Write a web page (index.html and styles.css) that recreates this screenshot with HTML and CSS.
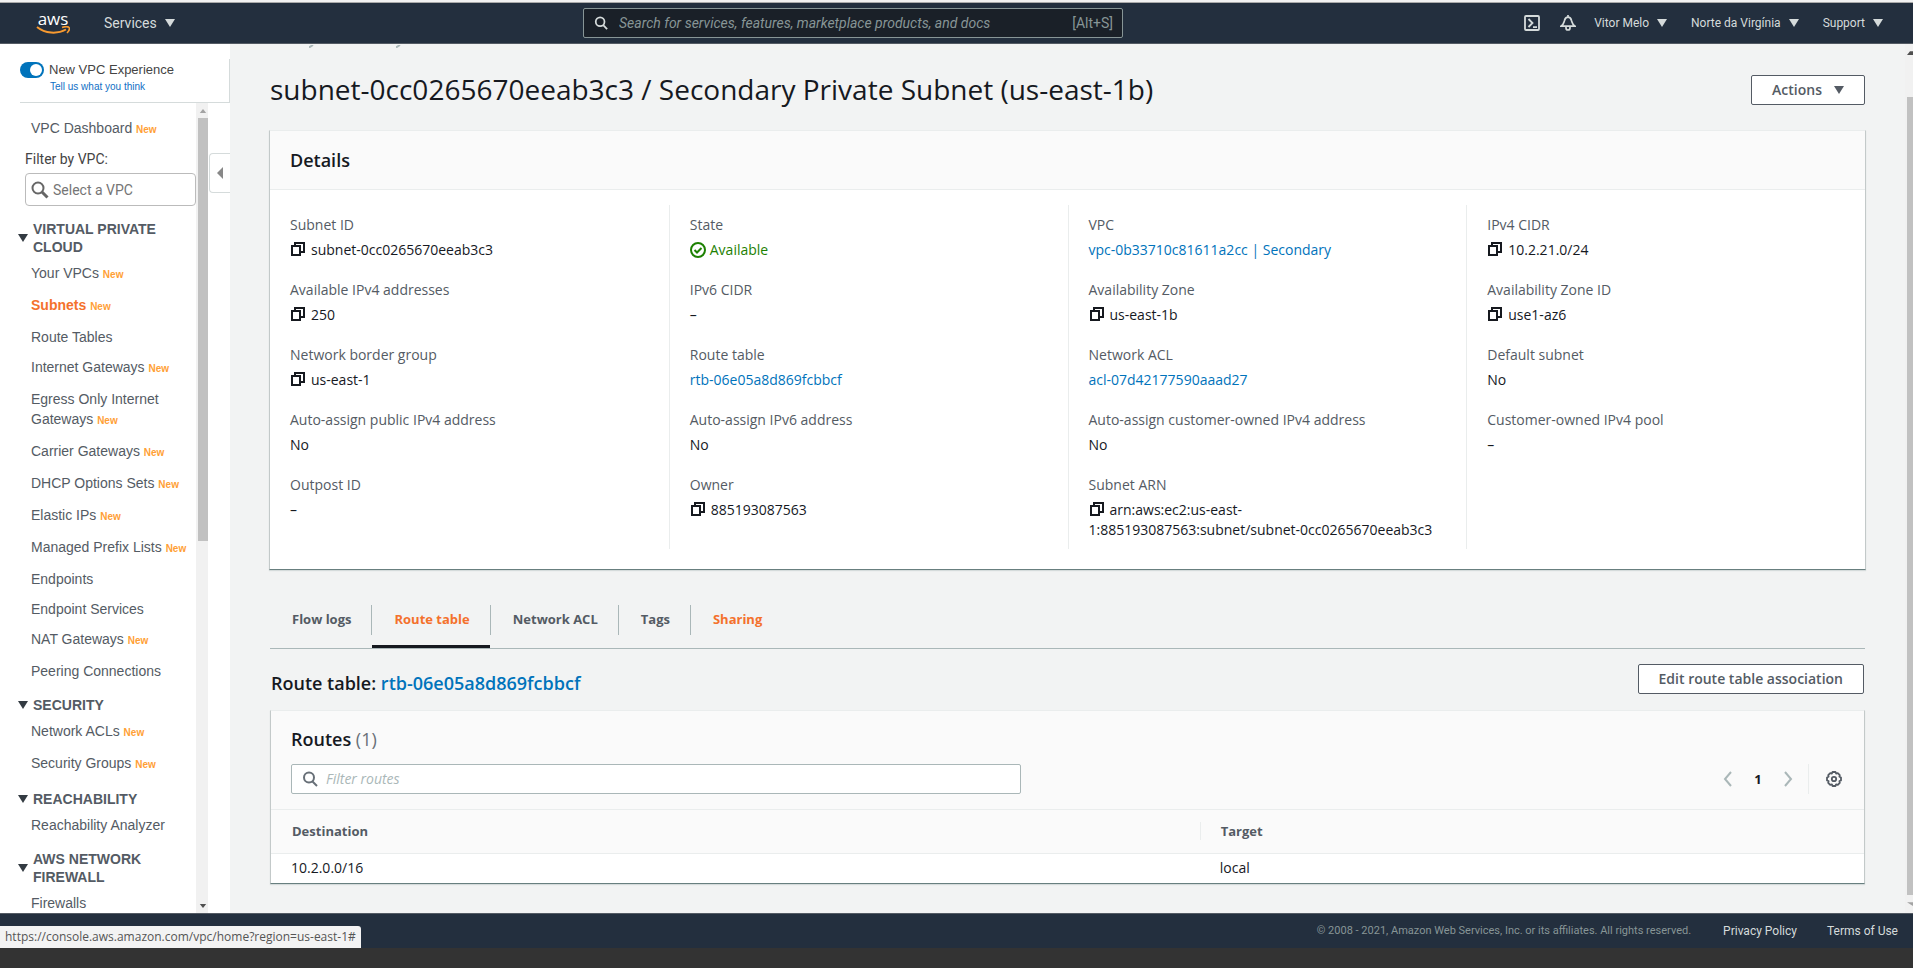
FILE: index.html
```html
<!DOCTYPE html>
<html lang="en">
<head>
<meta charset="utf-8">
<title>Subnets | VPC Management Console</title>
<link rel="stylesheet" href="styles.css">
</head>
<body>
<svg class="defs" aria-hidden="true">
  <symbol id="copy" viewBox="0 0 16 16"><path d="M2 5h8v9H2zM5 5V2h9v9h-4" fill="none" stroke="currentColor" stroke-width="2"/></symbol>
  <symbol id="search" viewBox="0 0 16 16"><circle cx="7" cy="6.500" r="5" fill="none" stroke="currentColor" stroke-width="2"/><path d="M10.500 10.500 15 15" stroke="currentColor" stroke-width="2"/></symbol>
  <symbol id="down" viewBox="0 0 10 8"><path d="M0 0h10L5 8z" fill="currentColor"/></symbol>
</svg>

<header class="topbar">
  <a class="logo" href="#" aria-label="AWS home">
    <span class="logo-text">aws</span>
    <svg class="smile" viewBox="0 0 34 9" aria-hidden="true"><path d="M1 1c8 6.500 20 7.500 29 2.500" fill="none" stroke="#f79a30" stroke-width="2"/><path d="M26 1.500c3-1 6-1 7 0s0 3.500-2 5.500" fill="none" stroke="#f79a30" stroke-width="1.600"/></svg>
  </a>
  <button class="nav-btn services">Services <svg class="caret"><use href="#down"/></svg></button>
  <label class="search-top">
    <svg class="i14"><use href="#search"/></svg>
    <input type="text" aria-label="Search" placeholder="Search for services, features, marketplace products, and docs">
    <span>[Alt+S]</span>
  </label>
  <nav class="tools">
    <button class="icon-btn" aria-label="CloudShell"><svg viewBox="0 0 16 16"><rect x="1" y="1" width="14" height="14" rx="1" fill="none" stroke="currentColor" stroke-width="1.800"/><path d="M4.500 4 8.500 8l-4 4M9 12.200h4" fill="none" stroke="currentColor" stroke-width="1.800"/></svg></button>
    <button class="icon-btn bell" aria-label="Notifications"><svg viewBox="0 0 16 16"><path d="M1 11.200c2.800-1.700 2.700-3.200 3.500-5.700C5 3.200 6.300 2.200 8 2.200s3 1 3.500 3.300c.8 2.500.7 4 3.500 5.700zM8 0v2.500M6 11.500V13q0 2 2 2t2-2v-1.500" fill="none" stroke="currentColor" stroke-width="1.700"/></svg></button>
    <button class="nav-btn small">Vitor Melo <svg class="caret"><use href="#down"/></svg></button>
    <button class="nav-btn small">Norte da Virgínia <svg class="caret"><use href="#down"/></svg></button>
    <button class="nav-btn small">Support <svg class="caret"><use href="#down"/></svg></button>
  </nav>
</header>

<div class="body">
  <aside class="sidebar">
    <div class="experience">
      <label class="switch"><input type="checkbox" checked><span class="track"></span><span>New VPC Experience</span></label>
      <a href="#">Tell us what you think</a>
    </div>
    <div class="side-scroll">
      <nav class="side-nav">
        <a class="item new dash" href="#">VPC Dashboard <b>New</b></a>
        <label class="filter-label" for="vpc">Filter by VPC:</label>
        <div class="vpc-select"><svg class="i18" viewBox="0 0 18 18"><circle cx="7" cy="7" r="5.500" fill="none" stroke="currentColor" stroke-width="2"/><path d="m11 11 5.500 5.500" stroke="currentColor" stroke-width="3"/></svg><input id="vpc" type="text" placeholder="Select a VPC"></div>
        <h2><svg class="caret"><use href="#down"/></svg>VIRTUAL PRIVATE CLOUD</h2>
        <a class="item new" href="#">Your VPCs <b>New</b></a>
        <a class="item new current" href="#">Subnets <b>New</b></a>
        <a class="item" href="#">Route Tables</a>
        <a class="item new" href="#">Internet Gateways <b>New</b></a>
        <a class="item new" href="#">Egress Only Internet<br>Gateways <b>New</b></a>
        <a class="item new" href="#">Carrier Gateways <b>New</b></a>
        <a class="item new" href="#">DHCP Options Sets <b>New</b></a>
        <a class="item new" href="#">Elastic IPs <b>New</b></a>
        <a class="item new" href="#">Managed Prefix Lists <b>New</b></a>
        <a class="item" href="#">Endpoints</a>
        <a class="item" href="#">Endpoint Services</a>
        <a class="item new" href="#">NAT Gateways <b>New</b></a>
        <a class="item" href="#">Peering Connections</a>
        <h2><svg class="caret"><use href="#down"/></svg>SECURITY</h2>
        <a class="item new" href="#">Network ACLs <b>New</b></a>
        <a class="item new" href="#">Security Groups <b>New</b></a>
        <h2><svg class="caret"><use href="#down"/></svg>REACHABILITY</h2>
        <a class="item" href="#">Reachability Analyzer</a>
        <h2><svg class="caret"><use href="#down"/></svg>AWS NETWORK FIREWALL</h2>
        <a class="item" href="#">Firewalls</a>
      </nav>
      <div class="scrollbar side-bar"><svg viewBox="0 0 8 5"><path d="M0 5h8L4 0z" fill="#a3a3a3"/></svg><i></i><svg viewBox="0 0 8 5"><path d="M0 0h8L4 5z" fill="#505050"/></svg></div>
    </div>
    <button class="collapse" aria-label="Collapse navigation"><svg viewBox="0 0 6 12"><path d="M6 0v12L0 6z" fill="#888"/></svg></button>
  </aside>

  <main>
    <div class="crumbs" aria-hidden="true"><svg viewBox="0 0 5 3"><path d="M0 2.500 4 0" stroke="#aab7b8" stroke-width="2"/></svg><svg viewBox="0 0 5 3"><path d="M0 2.500 4 0" stroke="#aab7b8" stroke-width="2"/></svg></div>
    <div class="title-row">
      <h1>subnet-0cc0265670eeab3c3 / Secondary Private Subnet (us-east-1b)</h1>
      <button class="btn">Actions <svg class="caret"><use href="#down"/></svg></button>
    </div>

    <section class="card">
      <h2 class="card-head">Details</h2>
      <div class="details">
        <dl>
          <dt>Subnet ID</dt><dd><svg class="copy"><use href="#copy"/></svg>subnet-0cc0265670eeab3c3</dd>
          <dt>Available IPv4 addresses</dt><dd><svg class="copy"><use href="#copy"/></svg>250</dd>
          <dt>Network border group</dt><dd><svg class="copy"><use href="#copy"/></svg>us-east-1</dd>
          <dt>Auto-assign public IPv4 address</dt><dd>No</dd>
          <dt>Outpost ID</dt><dd>–</dd>
        </dl>
        <dl>
          <dt>State</dt><dd class="ok"><svg class="check" viewBox="0 0 16 16"><circle cx="8" cy="8" r="7" fill="none" stroke="currentColor" stroke-width="2"/><path d="m4.500 8 2.500 2.500L11.500 6" fill="none" stroke="currentColor" stroke-width="2"/></svg>Available</dd>
          <dt>IPv6 CIDR</dt><dd>–</dd>
          <dt>Route table</dt><dd><a href="#">rtb-06e05a8d869fcbbcf</a></dd>
          <dt>Auto-assign IPv6 address</dt><dd>No</dd>
          <dt>Owner</dt><dd><svg class="copy"><use href="#copy"/></svg>885193087563</dd>
        </dl>
        <dl>
          <dt>VPC</dt><dd><a href="#">vpc-0b33710c81611a2cc | Secondary</a></dd>
          <dt>Availability Zone</dt><dd><svg class="copy"><use href="#copy"/></svg>us-east-1b</dd>
          <dt>Network ACL</dt><dd><a href="#">acl-07d42177590aaad27</a></dd>
          <dt>Auto-assign customer-owned IPv4 address</dt><dd>No</dd>
          <dt>Subnet ARN</dt><dd><svg class="copy"><use href="#copy"/></svg>arn:aws:ec2:us-east-<br>1:885193087563:subnet/subnet-0cc0265670eeab3c3</dd>
        </dl>
        <dl>
          <dt>IPv4 CIDR</dt><dd><svg class="copy"><use href="#copy"/></svg>10.2.21.0/24</dd>
          <dt>Availability Zone ID</dt><dd><svg class="copy"><use href="#copy"/></svg>use1-az6</dd>
          <dt>Default subnet</dt><dd>No</dd>
          <dt>Customer-owned IPv4 pool</dt><dd>–</dd>
        </dl>
      </div>
    </section>

    <div class="tabs" role="tablist">
      <button role="tab"><span>Flow logs</span></button>
      <button role="tab" class="active" aria-selected="true"><span>Route table</span></button>
      <button role="tab"><span>Network ACL</span></button>
      <button role="tab"><span>Tags</span></button>
      <button role="tab" class="hover"><span>Sharing</span></button>
    </div>

    <div class="sub-row">
      <h2>Route table: <a href="#">rtb-06e05a8d869fcbbcf</a></h2>
      <button class="btn">Edit route table association</button>
    </div>

    <section class="card routes">
      <div class="routes-head">
        <h2>Routes <span>(1)</span></h2>
        <div class="routes-tools">
          <label class="filter"><svg class="i16"><use href="#search"/></svg><input type="text" aria-label="Filter routes" placeholder="Filter routes"></label>
          <div class="pager">
            <button aria-label="Previous page"><svg viewBox="0 0 10 16"><path d="M8 1 2 8l6 7" fill="none" stroke="#aab7b8" stroke-width="2"/></svg></button>
            <button class="page">1</button>
            <button aria-label="Next page"><svg viewBox="0 0 10 16"><path d="m2 1 6 7-6 7" fill="none" stroke="#aab7b8" stroke-width="2"/></svg></button>
            <button class="gear" aria-label="Preferences"><svg viewBox="0 0 16 16"><path d="M6.500 1h3l.6 1.500 1.700-.4 2 2-.4 1.700L15 6.500v3l-1.600.6.4 1.700-2 2-1.700-.4L9.500 15h-3l-.6-1.600-1.700.4-2-2 .4-1.700L1 9.500v-3l1.600-.7-.4-1.700 2-2 1.700.4z" fill="none" stroke="currentColor" stroke-width="1.800" stroke-linejoin="round"/><circle cx="8" cy="8" r="2.200" fill="none" stroke="currentColor" stroke-width="1.800"/></svg></button>
          </div>
        </div>
      </div>
      <table>
        <thead><tr><th><span>Destination</span></th><th><span>Target</span></th></tr></thead>
        <tbody><tr><td>10.2.0.0/16</td><td>local</td></tr></tbody>
      </table>
    </section>
  </main>
  <div class="scrollbar page-bar"><svg viewBox="0 0 8 5"><path d="M0 5h8V0H4z" fill="#505050"/></svg><i></i><svg viewBox="0 0 8 5"><path d="M0 0h8v5z" fill="#a3a3a3"/></svg></div>
</div>

<footer>
  <span>© 2008 - 2021, Amazon Web Services, Inc. or its affiliates. All rights reserved.</span>
  <a href="#">Privacy Policy</a>
  <a href="#">Terms of Use</a>
  <div class="status">https://console.aws.amazon.com/vpc/home?region=us-east-1#</div>
</footer>
</body>
</html>
```
FILE: styles.css
```css
* { box-sizing: border-box; }
body {
  margin: 0; height: 100vh; overflow: hidden;
  display: flex; flex-direction: column;
  background: #333; color: #16191f;
  border-top: 2px solid #f2f2f2; padding-bottom: 20px;
  font: 14px/20px "Open Sans", "Noto Sans", sans-serif;
}
h1, h2, dl, dd { margin: 0; }
a { color: #0073bb; text-decoration: none; }
button, input { font: inherit; color: inherit; }
button { background: none; border: 0; padding: 0; }
input { border: 0; background: none; padding: 0; outline: 0; min-width: 0; }
svg { flex: none; display: block; }
.defs { position: absolute; width: 0; height: 0; }
.caret { width: 10px; height: 8px; }
.i14 { width: 14px; height: 14px; }
.i16 { width: 16px; height: 16px; }
.i18 { width: 18px; height: 18px; }

/* top bar */
.topbar {
  flex: none; height: 42px; display: flex; align-items: center;
  background: #232f3e; color: #d5dbdb; padding: 0 30px 0 36px;
  border-top: 1px solid #aaa; border-bottom: 1px solid #545b64;
  font-family: Roboto, sans-serif;
}
.logo { color: #fff; width: 34px; display: grid; justify-items: center; }
.logo-text { font: 500 17px/14px "Open Sans", sans-serif; }
.smile { width: 34px; height: 9px; }
.nav-btn { display: flex; align-items: center; gap: 8px; font-size: 14px; }
.small { font-size: 12px; }
.services { margin-left: 34px; width: 110px; }
.services .caret { margin-right: auto; }
.search-top {
  margin-left: 369px; margin-right: auto; width: 540px; height: 30px; display: flex; align-items: center; gap: 11px;
  background: #1a2028; border: 1px solid #879596; border-radius: 2px; padding: 0 9px 0 10px; color: #879596;
}
.search-top svg { color: #d5dbdb; }
.search-top input { flex: 1; font-style: italic; }
.search-top input::placeholder { color: #879596; opacity: 1; }
.tools { display: flex; align-items: center; gap: 24px; }
.icon-btn svg { width: 16px; height: 16px; }
.icon-btn { margin-right: -4px; }
.bell { margin-right: -6px; }

/* frame */
.body { flex: 1; min-height: 0; display: flex; background: #f2f3f3; }
.sidebar {
  position: relative; flex: none; width: 230px; background: #fff; display: flex; flex-direction: column;
  font-family: "Liberation Sans", sans-serif; color: #545b64;
}
.experience { flex: none; margin: 15px 0 0 20px; height: 44px; border-right: 1px solid #d5dbdb; border-bottom: 1px solid #d5dbdb; }
.switch { display: flex; align-items: center; gap: 5px; height: 22px; color: #444; font-size: 13px; }
.switch input { position: absolute; opacity: 0; }
.track { width: 24px; height: 16px; border-radius: 8px; background: #0073bb; display: flex; justify-content: flex-end; padding: 2px; }
.track::after { content: ""; width: 12px; height: 12px; border-radius: 50%; background: #fff; }
.experience a { display: block; margin-left: 30px; font-size: 10px; line-height: 12px; color: #0f6fc5; }
.side-scroll { flex: 1; min-height: 0; overflow: hidden; display: flex; }
.side-nav { width: 196px; padding-top: 15px; }
.item { display: block; padding: 0 0 10px 31px; color: #545b64; white-space: nowrap; }
.item.new { padding-bottom: 12px; }
.item b { font-size: 10px; line-height: 10px; color: #ff9f36; }
.item.current { font-weight: bold; color: #f4712c; }
.item.dash { padding-bottom: 10px; }
.filter-label { display: block; margin-left: 25px; height: 25px; line-height: 22px; font-family: Roboto, sans-serif; color: #444; }
.vpc-select {
  margin-left: 25px; height: 33px; border: 1px solid #bbb; border-radius: 4px; display: flex; align-items: center;
  gap: 4px; padding-left: 5px; color: #666; font-family: Roboto, sans-serif;
}
.vpc-select input { width: 120px; }
.vpc-select input::placeholder { color: #757575; opacity: 1; }
.side-nav h2 { display: flex; align-items: center; gap: 5px; margin: 5px 0 7px; padding: 0 10px 0 18px; font-size: 14px; line-height: 18px; }
.side-nav .vpc-select + h2 { margin-top: 14px; }
.side-nav h2 svg { color: #333b42; }
.scrollbar { background: #f1f1f1; display: flex; flex-direction: column; align-items: flex-end; }
.scrollbar i { width: 10px; background: #c1c1c1; }
.scrollbar svg { width: 8px; height: 4px; }
.side-bar { width: 12px; }
.side-bar svg { margin: 6px 1px 5px; }
.side-bar i { height: 423px; margin-bottom: auto; }
.page-bar { width: 8px; margin-left: auto; overflow: hidden; }
.page-bar svg { width: 6px; margin: 7px 0; }
.page-bar i { width: 6px; flex: 1; margin-top: 35px; }
.collapse {
  position: absolute; right: 0; top: 109px; width: 21px; height: 40px;
  border: 1px solid #d5dbdb; border-right: 0; border-radius: 4px 0 0 4px; display: grid; place-items: center;
}
.collapse svg { width: 6px; height: 12px; }

/* content */
main { flex: 1; min-width: 0; padding: 0 39px; }
.crumbs { display: flex; gap: 82px; padding: 1px 0 0 40px; height: 29px; }
.crumbs svg { width: 5px; height: 3px; }
.title-row { display: flex; justify-content: space-between; align-items: center; height: 34px; margin-bottom: 23px; }
h1 { font-size: 28px; line-height: 32px; font-weight: 400; padding: 0 0 2px 1px; white-space: nowrap; }
.btn {
  height: 30px; padding: 0 20px; border: 1px solid #545b64; border-radius: 2px; background: #fff;
  color: #545b64; font-weight: 600; display: flex; align-items: center; gap: 12px; margin-right: 1px;
}
.card { background: #fff; border: 1px solid #c3c9c9; border-top-color: #eaeded; border-bottom-color: #687f7f; box-shadow: 0 1px 1px #d5dbdb; }
.card-head { height: 59px; line-height: 58px; padding-left: 20px; background: #fafafa; border-bottom: 1px solid #eaeded; font-size: 18px; font-weight: 600; }
.details { display: grid; grid-template-columns: repeat(4, 1fr); padding: 15px 0 20px; }
dl { padding: 10px 19px 9px 20px; border-left: 1px solid #eaeded; }
dl:first-child { border-left: 0; }
dt { color: #545b64; margin-bottom: 5px; }
dd + dt { margin-top: 20px; }
.ok { color: #1d8102; }
.copy, .check { display: inline-block; width: 16px; height: 16px; vertical-align: -2px; margin-right: 5px; }
.check { vertical-align: -3px; margin-right: 4px; }
.tabs { display: flex; height: 59px; margin: 20px 1px 0; border-bottom: 1px solid #aab7b8; }
.tabs button { display: flex; align-items: center; color: #545b64; font-size: 13px; font-weight: 700; border-bottom: 3px solid transparent; margin-right: 1px; }
.tabs span { padding: 5px 20px 3px 22px; }
.tabs button + button { position: relative; }
.tabs button + button::before { content: ""; position: absolute; left: -1px; top: 15px; height: 30px; border-left: 1px solid #aab7b8; }
.tabs .active { border-bottom-color: #16191f; color: #f4712c; }
.tabs .hover { color: #f4712c; }
.sub-row { display: flex; align-items: center; justify-content: space-between; margin: 15px 1px 16px; padding-left: 1px; }
.sub-row h2, .routes-head h2 { font-size: 18px; line-height: 22px; padding-top: 8px; font-weight: 600; }
.routes { margin: 0 1px; }
.routes-head { background: #fafafa; padding: 9px 20px 15px; border-bottom: 1px solid #eaeded; }
.routes-head h2 span { color: #687078; font-weight: 400; }
.routes-tools { display: flex; justify-content: space-between; padding-top: 14px; }
.filter { width: 47%; height: 30px; background: #fff; border: 1px solid #aab7b8; border-radius: 2px; display: flex; align-items: center; gap: 8px; padding: 0 10px; color: #687078; }
.filter input { flex: 1; font-style: italic; }
.filter input::placeholder { color: #aab7b8; opacity: 1; }
.pager { display: flex; align-items: center; }
.pager button { width: 30px; display: grid; place-items: center; }
.pager svg { width: 10px; height: 16px; }
.pager .page { font-size: 13px; font-weight: 700; }
.pager .gear { width: 36px; height: 30px; margin-left: 5px; border-left: 1px solid #eaeded; color: #545b64; justify-content: end; padding-right: 2px; }
.pager .gear svg { width: 16px; }
table { width: 100%; border-collapse: collapse; }
th, td { text-align: left; padding: 0 20px; }
th:first-child { width: 58.300%; padding-left: 21px; }
th { height: 43px; background: #fafafa; color: #545b64; border-bottom: 1px solid #eaeded; font-size: 13px; }
th + th, td + td { padding-left: 0; }
th + th span { border-left: 1px solid #eaeded; padding-left: 20px; }
td + td { padding-left: 20px; }
td { height: 30px; }

/* footer */
footer {
  position: relative; flex: none; height: 35px; display: flex; align-items: center; justify-content: flex-end; gap: 30px;
  padding-right: 15px; background: #232f3e; border-top: 1px solid #545b64; color: #879596; font: 11px/16px Roboto, sans-serif;
}
footer span { margin-right: 2px; }
footer a { color: #d5dbdb; font-size: 12px; }
.status {
  position: absolute; left: 0; bottom: 0; height: 22px; padding: 0 5px; background: #f3f3f3; color: #555;
  border-radius: 0 3px 0 0; font: 12px/21px "Open Sans", sans-serif;
}
```
